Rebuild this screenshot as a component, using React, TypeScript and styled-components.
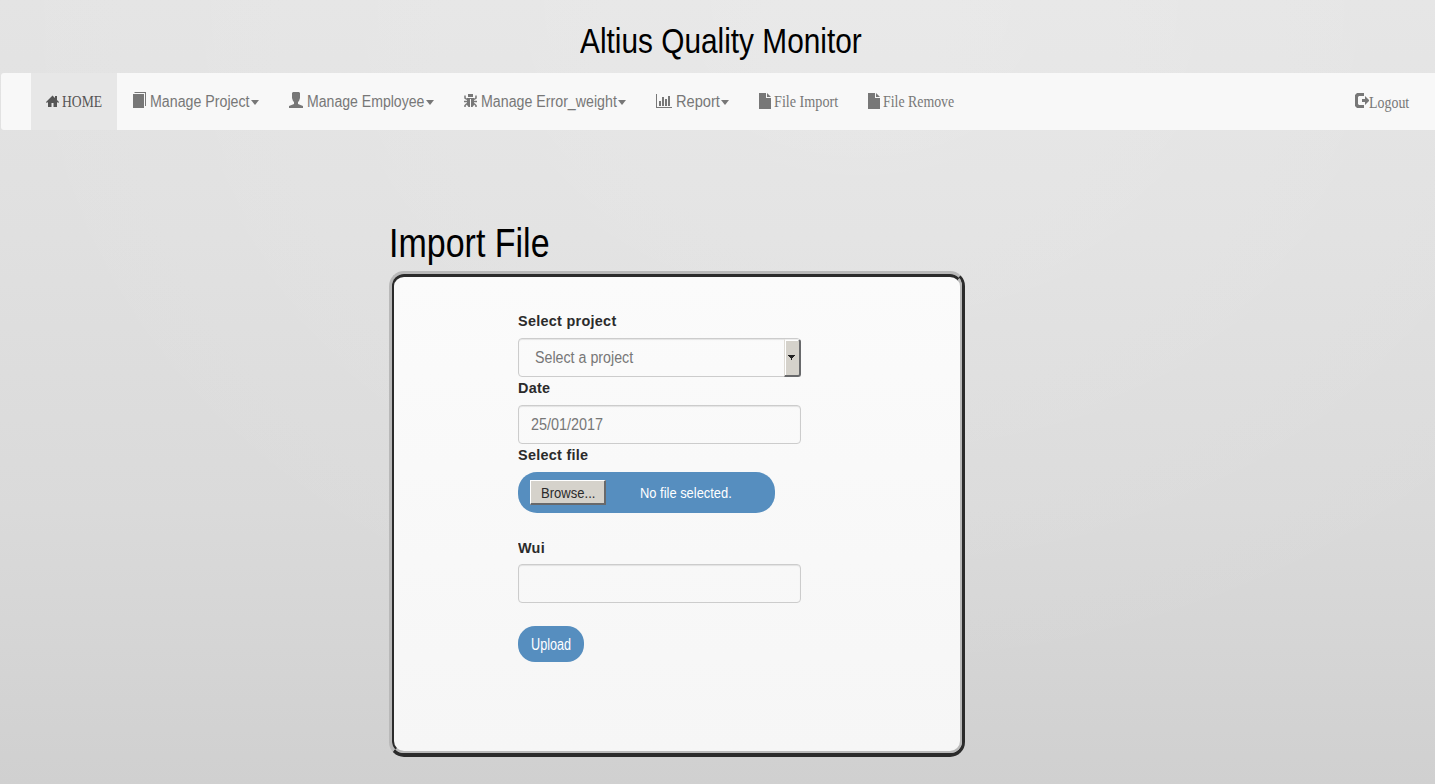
import React from "react";
import styled, { createGlobalStyle } from "styled-components";

const GlobalStyle = createGlobalStyle`
  * { box-sizing: border-box; }
  html, body { margin: 0; padding: 0; overflow: hidden; }
  body { font-family: "Liberation Sans", Arial, sans-serif; color: #2b2b2b; }
`;

const Page = styled.div`
  height: 784px;
  overflow: hidden;
  background:
    radial-gradient(ellipse 900px 700px at 60% 0%, rgba(255, 255, 255, 0.2), rgba(255, 255, 255, 0) 100%),
    linear-gradient(180deg, #e4e4e4 0%, #e0e0e0 30%, #dadada 65%, #d0d0d0 100%);
`;

/* Condensed text: $w is the width it occupies, $s its horizontal scale. */
const Text = styled.span<{ $w: number; $s: number; $size?: number; $serif?: boolean; $dy?: number }>`
  display: block;
  flex: none;
  width: ${(p) => p.$w}px;
  margin-top: ${(p) => p.$dy ?? 0}px;
  font-family: ${(p) => (p.$serif ? '"Liberation Serif", "Times New Roman", serif' : '"Liberation Sans", Arial, sans-serif')};
  font-size: ${(p) => p.$size ?? 16}px;
  line-height: 20px;
  white-space: nowrap;
  transform: scaleX(${(p) => p.$s});
  transform-origin: 0 50%;
`;

const Title = styled.h1`
  margin: 0 0 0 580px;
  padding-top: 21px;
  height: 73px;
  width: 400px;
  font-size: 35px;
  line-height: 40px;
  font-weight: 400;
  color: #000;
  white-space: nowrap;
  transform: scaleX(0.852);
  transform-origin: 0 0;
`;

const Nav = styled.nav`
  display: flex;
  height: 57px;
  margin-left: 1px;
  padding: 0 11px 0 30px;
  background: #f8f8f8;
  border-radius: 3px 0 0 3px;
`;

const Item = styled.a<{ $w: number; $active?: boolean; $right?: boolean }>`
  display: flex;
  align-items: flex-start;
  width: ${(p) => p.$w}px;
  padding: 19px 0 0 15px;
  margin-left: ${(p) => (p.$right ? "auto" : "0")};
  color: ${(p) => (p.$active ? "#555" : "#777")};
  background: ${(p) => (p.$active ? "#e7e7e7" : "transparent")};
`;

const Icon = styled.svg<{ $gap?: number }>`
  display: block;
  flex: none;
  height: 18px;
  margin-right: ${(p) => p.$gap ?? 3}px;
  fill: currentColor;
`;

const Caret = styled.span`
  width: 0;
  height: 0;
  margin: 8px 0 0 1px;
  border: 4px solid transparent;
  border-top: 5px solid currentColor;
  border-bottom: 0;
`;

const Main = styled.main`
  width: 576px;
  margin: 91px 0 0 389px;
`;

const Heading = styled.h2`
  margin: 0;
  height: 50px;
  font-size: 40px;
  line-height: 44px;
  font-weight: 400;
  color: #000;
  white-space: nowrap;
  transform: scaleX(0.85);
  transform-origin: 0 0;
`;

const Card = styled.section`
  height: 486px;
  border: solid;
  border-width: 3px 3px 4px 3px;
  border-color: #b9b9b9 #2b2b2b #2b2b2b #b9b9b9;
  border-radius: 15px;
`;

const CardBody = styled.div`
  display: flex;
  flex-direction: column;
  align-items: flex-start;
  height: 100%;
  padding: 35px 0 0 124px;
  border: solid;
  border-width: 3px 2px 2px 2px;
  border-color: #2b2b2b #b9b9b9 #b9b9b9 #2b2b2b;
  border-radius: 12px;
  background: linear-gradient(180deg, #fbfbfb, #f6f6f6);
`;

const Label = styled.label<{ $mt?: number; $mb?: number }>`
  height: 20px;
  margin: ${(p) => p.$mt ?? 2}px 0 ${(p) => p.$mb ?? 6}px;
  font-size: 15px;
  line-height: 20px;
  font-weight: 700;
  letter-spacing: 0.3px;
  white-space: nowrap;
  transform: scaleX(0.96);
  transform-origin: 0 50%;
`;

const Field = styled.div<{ $pad?: number }>`
  display: flex;
  justify-content: space-between;
  width: 283px;
  height: 39px;
  padding-left: ${(p) => p.$pad ?? 12}px;
  border: 1px solid #ccc;
  border-radius: 4px;
  box-shadow: inset 0 1px 1px rgba(0, 0, 0, 0.09);
  color: #777;
`;

const Arrow = styled.span`
  display: flex;
  align-items: center;
  justify-content: center;
  width: 17px;
  height: 38px;
  margin-right: -1px;
  padding-right: 1px;
  background: #d5d2cb;
  border: solid;
  border-width: 1px 2px 2px 1px;
  border-color: #eee #68696b #68696b #dedbd5;
  box-shadow: inset 1px 1px #fff;
  border-radius: 0 3px 3px 0;
`;

const FilePicker = styled.div`
  display: flex;
  width: 257px;
  height: 41px;
  padding: 8px 0 0 12px;
  border-radius: 19px;
  background: #568ebf;
  color: #fff;
`;

const Browse = styled.span`
  width: 76px;
  height: 25px;
  padding-left: 10px;
  margin-right: 34px;
  background: #d5d2cb;
  color: #2b2b2b;
  border: solid;
  border-width: 1px 2px 2px 1px;
  border-color: #fff #68696b #68696b #fff;
`;

const Upload = styled.span`
  width: 66px;
  height: 36px;
  margin-top: 23px;
  padding-left: 13px;
  border-radius: 17px;
  background: #568ebf;
  color: #fff;
`;

const FileIcon = () => (
  <Icon width="12" viewBox="0 0 12 18">
    <path d="M0 1h7v5h5v11H0zM8 1l4 4H8z" />
  </Icon>
);

export default function App() {
  return (
    <Page>
      <GlobalStyle />
      <Title>Altius Quality Monitor</Title>
      <Nav>
        <Item $w={86} $active>
          <Icon width="13" viewBox="0 0 13 18">
            <path d="M6.5 3.500L0 10l.8 1L2 10v5h3.500v-4h2v4H11v-5l1.200 1 .8-1-2-2V4H9v2z" />
          </Icon>
          <Text $w={40} $s={0.85} $serif>HOME</Text>
        </Item>
        <Item $w={157}>
          <Icon width="15" viewBox="-1 0 15 18">
            <path d="M0 2h11v14H0zM1 1l1-1h11v14h-1V1z" />
          </Icon>
          <Text $w={100} $s={0.888}>Manage Project</Text>
          <Caret />
        </Item>
        <Item $w={175}>
          <Icon width="15" viewBox="0 0 15 18">
            <path d="M4 0h6l1 1v5l-1 3-1 1v2l5 2v2H0v-2l5-2v-2L4 9 3 6V1z" />
          </Icon>
          <Text $w={118} $s={0.88}>Manage Employee</Text>
          <Caret />
        </Item>
        <Item $w={192}>
          <Icon width="14" viewBox="0 0 14 18">
            <path d="M4 2h5v3H4zM3 6h3v9H4.500L3 13zM7 6h3v7l-1.500 2H7zM3 6h7v1H3z" />
            <path d="M1 3.500V6l2 1.500M12 3.500V6l-2 1.500M0 9.500h3M10 9.500h3M3 11.500l-2 2V15M10 11.500l2 2V15" fill="none" stroke="currentColor" strokeWidth="1.500" />
          </Icon>
          <Text $w={136} $s={0.888}>Manage Error_weight</Text>
          <Caret />
        </Item>
        <Item $w={103}>
          <Icon width="17" viewBox="0 0 17 18">
            <path d="M0 2h1v13h15v1H0zM3 9h2v5H3zM6 5h2v9H6zM9 7h2v7H9zM12 4h2v10h-2z" />
          </Icon>
          <Text $w={44} $s={0.915}>Report</Text>
          <Caret />
        </Item>
        <Item $w={109}>
          <FileIcon />
          <Text $w={64} $s={0.885} $serif>File Import</Text>
        </Item>
        <Item $w={102}>
          <FileIcon />
          <Text $w={71} $s={0.866} $serif>File Remove</Text>
        </Item>
        <Item $w={84} $right>
          <Icon width="14" viewBox="0 0 14 18" $gap={0}>
            <path d="M9 1v3H4L3 5v7l1 1h5v3H2L0 14V3l2-2zM10 4l4.500 4.500L10 13v-3H7V7h3z" />
          </Icon>
          <Text $w={40} $s={0.87} $serif $dy={1}>Logout</Text>
        </Item>
      </Nav>
      <Main>
        <Heading>Import File</Heading>
        <Card>
          <CardBody>
            <Label $mt={-1} $mb={7}>Select project</Label>
            <Field $pad={16}>
              <Text $w={98} $s={0.89} $dy={9}>Select a project</Text>
              <Arrow>
                <svg width="7" height="5" viewBox="0 0 7 5">
                  <path d="M0 0h7v1H6v1H5v1H4v2H3V3H2V2H1V1H0z" fill="#222" />
                </svg>
              </Arrow>
            </Field>
            <Label $mt={1} $mb={7}>Date</Label>
            <Field>
              <Text $w={72} $s={0.9} $dy={9}>25/01/2017</Text>
            </Field>
            <Label $mt={1} $mb={7}>Select file</Label>
            <FilePicker>
              <Browse>
                <Text $w={54} $s={0.87} $size={15} $dy={2}>Browse...</Text>
              </Browse>
              <Text $w={92} $s={0.86} $size={15} $dy={3}>No file selected.</Text>
            </FilePicker>
            <Label $mt={25}>Wui</Label>
            <Field />
            <Upload>
              <Text $w={40} $s={0.79} $dy={9}>Upload</Text>
            </Upload>
          </CardBody>
        </Card>
      </Main>
    </Page>
  );
}
